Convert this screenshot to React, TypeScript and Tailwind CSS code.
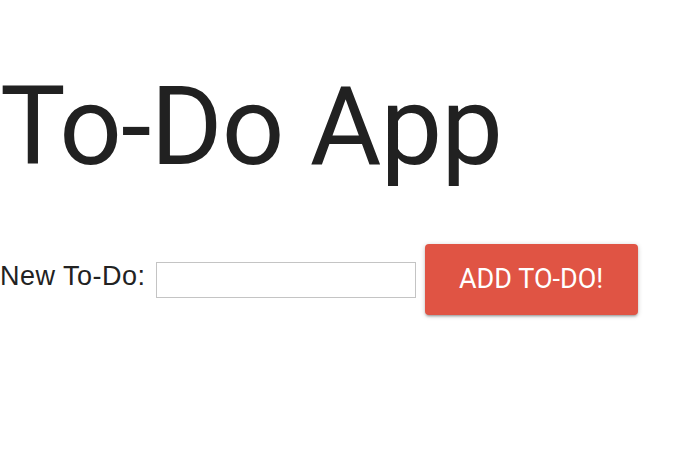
export default function App() {
  return (
    <div className="w-[696px] h-[456px] bg-white text-[#212121]">
      <h1 className="pt-[62px] m-0 text-[110px] leading-[129px] font-normal font-['Roboto',sans-serif] tracking-[-1px]">
        To-Do App
      </h1>

      {/* new todo row */}
      <div className="mt-[53px] flex items-center">
        <label className="pb-2 text-[27px] leading-[30px] tracking-[0.5px] font-['Liberation_Sans',Arial,sans-serif] text-[#222]">
          New To-Do:
        </label>
        <input
          type="text"
          className="ml-[10px] w-[260px] h-[36px] border border-[#c4c4c4] bg-white outline-none"
        />
        <button className="ml-[9px] w-[213px] h-[71px] rounded-[4px] bg-[#e05444] text-white text-[27px] font-['Roboto',sans-serif] shadow-[0_2px_2px_0_rgba(0,0,0,0.14),0_3px_1px_-2px_rgba(0,0,0,0.12),0_1px_5px_0_rgba(0,0,0,0.2)]">
          ADD TO-DO!
        </button>
      </div>
    </div>
  )
}
